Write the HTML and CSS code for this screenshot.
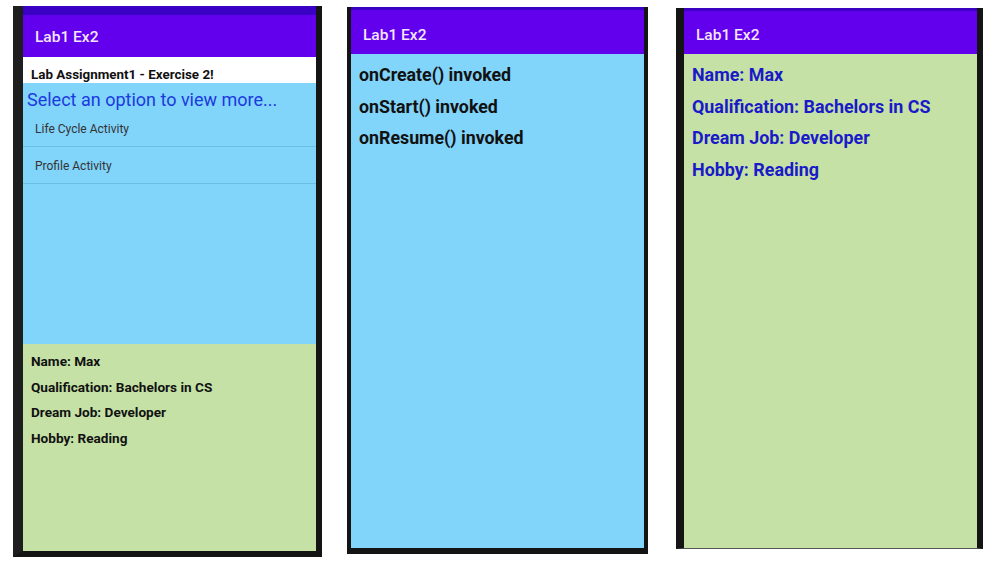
FILE: index.html
```html
<!DOCTYPE html>
<html>
<head>
<meta charset="utf-8">
<link rel="stylesheet" href="styles.css">
</head>
<body>
<div class="screens">
  <div class="phone phone-main">
    <div class="status"></div>
    <div class="appbar">Lab1 Ex2</div>
    <div class="heading">Lab Assignment1 - Exercise 2!</div>
    <div class="menu">
      <div class="prompt">Select an option to view more...</div>
      <div class="item">Life Cycle Activity</div>
      <div class="item">Profile Activity</div>
    </div>
    <div class="profile-small">
      <p>Name: Max</p>
      <p>Qualification: Bachelors in CS</p>
      <p>Dream Job: Developer</p>
      <p>Hobby: Reading</p>
    </div>
  </div>
  <div class="phone phone-cycle">
    <div class="status"></div>
    <div class="appbar">Lab1 Ex2</div>
    <div class="cycle">
      <p>onCreate() invoked</p>
      <p>onStart() invoked</p>
      <p>onResume() invoked</p>
    </div>
  </div>
  <div class="phone phone-profile">
    <div class="status"></div>
    <div class="appbar">Lab1 Ex2</div>
    <div class="profile">
      <p>Name: Max</p>
      <p>Qualification: Bachelors in CS</p>
      <p>Dream Job: Developer</p>
      <p>Hobby: Reading</p>
    </div>
  </div>
</div>
</body>
</html>
```

FILE: styles.css
```css
html, body {
  margin: 0;
  padding: 0;
  background: #ffffff;
  font-family: Roboto, "Liberation Sans", Arial, sans-serif;
}

.screens {
  display: flex;
  align-items: flex-start;
  padding-left: 13px;
  height: 565px;
}

.phone {
  display: flex;
  flex-direction: column;
  box-sizing: border-box;
  border-style: solid;
  border-color: #141414;
  overflow: hidden;
}

.status {
  background: #3a00c4;
  flex: none;
}

.appbar {
  flex: none;
  display: flex;
  align-items: center;
  box-sizing: border-box;
  background: #6200ee;
  color: #f4e6ff;
  font-size: 15.5px;
  font-weight: 500;
}

p {
  margin: 0;
}

/* phone 1 */
.phone-main {
  width: 309px;
  height: 551px;
  margin-top: 6px;
  border-width: 0 6px 6px 10px;
  border-left-color: #1e1e1e;
  box-shadow: inset 2px 0 0 #555;
}
.phone-main .status { height: 9px; }
.phone-main .appbar { height: 42px; padding-left: 12px; padding-top: 1px; }

.heading {
  flex: none;
  height: 26px;
  background: #ffffff;
  color: #111;
  font-size: 13.4px;
  font-weight: 700;
  padding-left: 8px;
  padding-top: 10px;
  box-sizing: border-box;
  line-height: 15px;
}

.menu {
  flex: none;
  height: 261px;
  background: #81d4fa;
}

.prompt {
  color: #1b3ae0;
  font-size: 18px;
  line-height: 23px;
  padding: 5px 0 0 4px;
  height: 27px;
  box-sizing: border-box;
}

.item {
  height: 37px;
  box-sizing: border-box;
  border-bottom: 1px solid #6bbfe4;
  display: flex;
  align-items: center;
  padding-left: 12px;
  padding-top: 2px;
  color: #333;
  font-size: 12px;
}

.profile-small {
  flex: 1;
  background: #c5e1a5;
  padding: 5px 0 0 8px;
  color: #111;
  font-weight: 700;
  font-size: 13.6px;
  line-height: 25.7px;
}

/* phone 2 */
.phone-cycle {
  width: 301px;
  height: 547px;
  margin-top: 7px;
  margin-left: 25px;
  border-width: 0 4px 6px 4px;
}
.phone-cycle .status { height: 3px; }
.phone-cycle .appbar { height: 44px; padding-left: 12px; padding-top: 5px; }

.cycle {
  flex: 1;
  background: #81d4fa;
  padding: 5px 0 0 8px;
  color: #111;
  font-weight: 700;
  font-size: 17.8px;
  line-height: 31.5px;
}

/* phone 3 */
.phone-profile {
  width: 307px;
  height: 541px;
  margin-top: 8px;
  margin-left: 28px;
  border-width: 0 6px 1px 8px;
  border-bottom-color: #555;
}
.phone-profile .status { height: 3px; }
.phone-profile .appbar { height: 43px; padding-left: 12px; padding-top: 4px; }

.profile {
  flex: 1;
  background: #c5e1a5;
  padding: 5px 0 0 8px;
  color: #1a1ac8;
  font-weight: 700;
  font-size: 17.9px;
  line-height: 31.5px;
}
```
